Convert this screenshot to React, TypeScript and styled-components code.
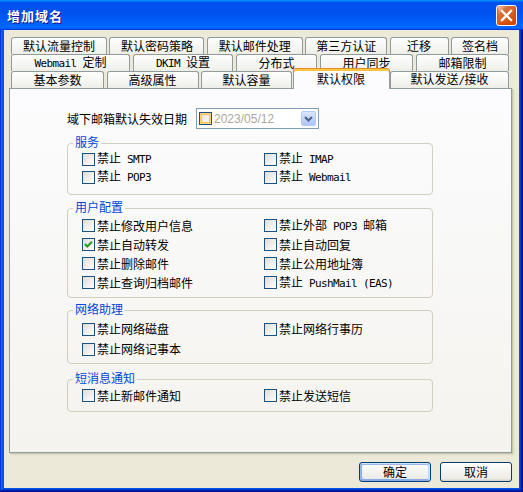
import React from "react";
import styled, { createGlobalStyle, css } from "styled-components";

const GlobalStyle = createGlobalStyle`
  html, body { margin: 0; padding: 0; background: #0054e3; }
  body { font-family: "Noto Sans CJK SC", "Liberation Sans", sans-serif; font-size: 12px; color: #000; }
  #root { width: 523px; height: 492px; }
`;

const Window = styled.div`
  width: 523px;
  height: 492px;
  display: flex;
  flex-direction: column;
  background: #0055e5;
  box-shadow: inset -1px -1px #00138c, inset 1px 1px #0831d9, inset -2px -2px #001ea0,
    inset 2px 2px #166aee, inset -3px -3px #003bda, inset 3px 3px #0855dd;
  overflow: hidden;
`;

const TitleBar = styled.div`
  height: 30px;
  flex: none;
  display: flex;
  align-items: center;
  justify-content: space-between;
  padding: 0 6px 0 7px;
  box-sizing: border-box;
  background: linear-gradient(180deg, #0997ff, #0053ee 8%, #0050ee 40%, #06f 88%, #06f 93%, #005bff 95%, #003dd7 96%, #003dd7);
`;

const Title = styled.span`
  color: #fff;
  font-weight: bold;
  font-size: 13px;
  letter-spacing: 1px;
  text-shadow: 1px 1px #0f1089;
`;

const CloseButton = styled.div`
  width: 21px;
  height: 21px;
  box-sizing: border-box;
  border: 1px solid #fff;
  border-radius: 3px;
  background: radial-gradient(circle at 90% 90%, #cc4600 0, #dc6527 55%, #cd7546 70%, #ffccb2 90%, #fff 100%);
  box-shadow: inset 0 -1px 2px 1px #da4600;
  display: flex;
  align-items: center;
  justify-content: center;
`;

const Client = styled.div`
  flex: 1;
  margin: 0 4px 4px 4px;
  background: #ece9d8;
  display: flex;
  flex-direction: column;
  min-height: 0;
`;

const TabStrip = styled.div`
  margin: 7px 10px 0 7px;
  display: flex;
  flex-direction: column;
`;

const TabRow = styled.div`
  height: 17px;
  display: flex;
  justify-content: space-between;
  align-items: flex-end;
`;

const Tab = styled.div<{ $w: number; $selected?: boolean }>`
  box-sizing: border-box;
  width: ${(p) => p.$w}px;
  height: 17px;
  flex: none;
  border: 1px solid #919b9c;
  border-bottom: none;
  border-radius: 3px 3px 0 0;
  background: linear-gradient(180deg, #fff, #fafaf9 26%, #f0f0ea 95%, #ecebe5);
  display: flex;
  align-items: center;
  justify-content: center;
  line-height: 14px;
  white-space: nowrap;
  ${(p) =>
    p.$selected &&
    css`
      position: relative;
      z-index: 1;
      height: 21px;
      margin: 0 -2px -1px;
      background: #fcfcfe;
      border-top: 1px solid #e68b2c;
      box-shadow: inset 0 2px #ffc83c;
    `}
`;

const TabLabel = styled.span`
  line-height: 14px;
`;

const Panel = styled.div`
  flex: 1;
  margin: 0 7px 0 5px;
  border: 1px solid #919b9c;
  background: linear-gradient(180deg, #fcfcfe, #f4f3ee);
  box-shadow: 1px 1px 0 #c9c6b5, 2px 2px 1px rgba(208, 206, 191, 0.6);
  padding: 19px 0 0 57px;
  min-height: 0;
`;

const DateRow = styled.div`
  display: flex;
  align-items: center;
  height: 21px;
  gap: 9px;
`;

const FieldLabel = styled.span`
  line-height: 14px;
`;

const DatePicker = styled.div`
  box-sizing: border-box;
  width: 123px;
  height: 21px;
  border: 1px solid #7f9db9;
  background: #fff;
  display: flex;
  align-items: center;
  padding: 0 2px;
`;

const DateCheck = styled.span`
  box-sizing: border-box;
  width: 13px;
  height: 13px;
  flex: none;
  border: 1px solid #1c5180;
  background: linear-gradient(135deg, #dcdcd7, #fff);
  box-shadow: inset 0 0 0 1px #fbd37a, inset 0 0 0 2px #f8c05c;
`;

const DateText = styled.span`
  margin-left: 2px;
  font-family: "Liberation Sans", Arial, sans-serif;
  font-size: 12px;
  color: #aca899;
`;

const DropButton = styled.span`
  box-sizing: border-box;
  margin-left: auto;
  width: 15px;
  height: 15px;
  border: 1px solid #b6c8f8;
  border-radius: 2px;
  background: linear-gradient(180deg, #dce6fe 0%, #c3d3fc 50%, #b0c4f7 100%);
  display: flex;
  align-items: center;
  justify-content: center;
`;

const Group = styled.fieldset<{ $mt: number; $pt: number; $pb: number }>`
  box-sizing: border-box;
  width: 366px;
  min-inline-size: 0;
  margin: ${(p) => p.$mt}px 0 0 0;
  padding: ${(p) => p.$pt}px 0 ${(p) => p.$pb}px 5px;
  border: 1px solid #d0d0bf;
  border-radius: 4px;
`;

const Legend = styled.legend`
  padding: 0 2px 3px;
  line-height: 11px;
  font-size: 12px;
  color: #0046d5;
`;

const Options = styled.div<{ $row: number }>`
  display: grid;
  grid-template-columns: 182px 1fr;
  grid-auto-rows: ${(p) => p.$row}px;
  margin-left: 9px;
`;

const CheckRow = styled.label`
  display: flex;
  align-items: center;
  gap: 2px;
  white-space: nowrap;
  line-height: 14px;
`;

const Box = styled.span`
  box-sizing: border-box;
  width: 13px;
  height: 13px;
  flex: none;
  border: 1px solid #1c5180;
  background: linear-gradient(135deg, #dcdcd7 0%, #fff 100%);
  display: flex;
  align-items: center;
  justify-content: center;
`;

const Latin = styled.span`
  font-family: "DejaVu Sans Mono", "Liberation Mono", monospace;
  font-size: 11px;
  letter-spacing: -0.62px;
  white-space: pre;
`;

const ButtonBar = styled.div`
  display: flex;
  justify-content: flex-end;
  gap: 9px;
  padding: 9px 7px 6px;
`;

const Button = styled.div<{ $default?: boolean }>`
  box-sizing: border-box;
  width: 72px;
  height: 20px;
  border: 1px solid #003c74;
  border-radius: 3px;
  background: linear-gradient(180deg, #fff, #ecebe6 86%, #d6d0c5);
  display: flex;
  align-items: center;
  justify-content: center;
  line-height: 14px;
  ${(p) =>
    p.$default &&
    css`
      box-shadow: inset -1px 1px #cee7ff, inset 1px 2px #98b8ea, inset -2px 2px #bcd4f6,
        inset 1px -1px #89ade4, inset 2px -2px #89ade4;
    `}
`;

const Txt = ({ children }: { children: string }) => (
  <>
    {children
      .split(/([\x20-\x7E]+)/)
      .filter((s) => s.length > 0)
      .map((part, i) =>
        /^[\x20-\x7E]+$/.test(part) ? <Latin key={i}>{part}</Latin> : <React.Fragment key={i}>{part}</React.Fragment>
      )}
  </>
);

const Check = ({ label, checked }: { label: string; checked?: boolean }) => (
  <CheckRow>
    <Box>
      {checked && (
        <svg width="11" height="11" viewBox="0 0 11 11">
          <polyline points="2,5 4.3,7.5 9,2.8" fill="none" stroke="#21a121" strokeWidth="2.2" />
        </svg>
      )}
    </Box>
    <span>
      <Txt>{label}</Txt>
    </span>
  </CheckRow>
);

const rows: { label: string; w: number; selected?: boolean }[][] = [
  [
    { label: "默认流量控制", w: 96 },
    { label: "默认密码策略", w: 95 },
    { label: "默认邮件处理", w: 96 },
    { label: "第三方认证", w: 82 },
    { label: "迁移", w: 59 },
    { label: "签名档", w: 58 },
  ],
  [
    { label: "Webmail 定制", w: 119 },
    { label: "DKIM 设置", w: 100 },
    { label: "分布式", w: 81 },
    { label: "用户同步", w: 93 },
    { label: "邮箱限制", w: 93 },
  ],
  [
    { label: "基本参数", w: 93 },
    { label: "高级属性", w: 92 },
    { label: "默认容量", w: 91 },
    { label: "默认权限", w: 97, selected: true },
    { label: "默认发送/接收", w: 119 },
  ],
];

export default function App() {
  return (
    <>
      <GlobalStyle />
      <Window>
        <TitleBar>
          <Title>增加域名</Title>
          <CloseButton>
            <svg width="19" height="19" viewBox="0 0 19 19">
              <path d="M5 5 L14 14 M14 5 L5 14" stroke="#fff" strokeWidth="2.3" strokeLinecap="square" />
            </svg>
          </CloseButton>
        </TitleBar>
        <Client>
          <TabStrip>
            {rows.map((row, ri) => (
              <TabRow key={ri}>
                {row.map((t) => (
                  <Tab key={t.label} $w={t.w} $selected={t.selected}>
                    <TabLabel>
                      <Txt>{t.label}</Txt>
                    </TabLabel>
                  </Tab>
                ))}
              </TabRow>
            ))}
          </TabStrip>
          <Panel>
            <DateRow>
              <FieldLabel>域下邮箱默认失效日期</FieldLabel>
              <DatePicker>
                <DateCheck />
                <DateText>2023/05/12</DateText>
                <DropButton>
                  <svg width="13" height="13" viewBox="0 0 13 13">
                    <polyline points="3,5 6.5,8.5 10,5" fill="none" stroke="#4d6185" strokeWidth="2" />
                  </svg>
                </DropButton>
              </DatePicker>
            </DateRow>

            <Group $mt={7} $pt={0} $pb={8}>
              <Legend>服务</Legend>
              <Options $row={18}>
                <Check label="禁止 SMTP" />
                <Check label="禁止 IMAP" />
                <Check label="禁止 POP3" />
                <Check label="禁止 Webmail" />
              </Options>
            </Group>

            <Group $mt={6} $pt={1} $pb={5}>
              <Legend>用户配置</Legend>
              <Options $row={19}>
                <Check label="禁止修改用户信息" />
                <Check label="禁止外部 POP3 邮箱" />
                <Check label="禁止自动转发" checked />
                <Check label="禁止自动回复" />
                <Check label="禁止删除邮件" />
                <Check label="禁止公用地址簿" />
                <Check label="禁止查询归档邮件" />
                <Check label="禁止 PushMail (EAS)" />
              </Options>
            </Group>

            <Group $mt={5} $pt={2} $pb={4}>
              <Legend>网络助理</Legend>
              <Options $row={20}>
                <Check label="禁止网络磁盘" />
                <Check label="禁止网络行事历" />
                <Check label="禁止网络记事本" />
              </Options>
            </Group>

            <Group $mt={8} $pt={0} $pb={6}>
              <Legend>短消息通知</Legend>
              <Options $row={19}>
                <Check label="禁止新邮件通知" />
                <Check label="禁止发送短信" />
              </Options>
            </Group>
          </Panel>
          <ButtonBar>
            <Button $default>确定</Button>
            <Button>取消</Button>
          </ButtonBar>
        </Client>
      </Window>
    </>
  );
}
